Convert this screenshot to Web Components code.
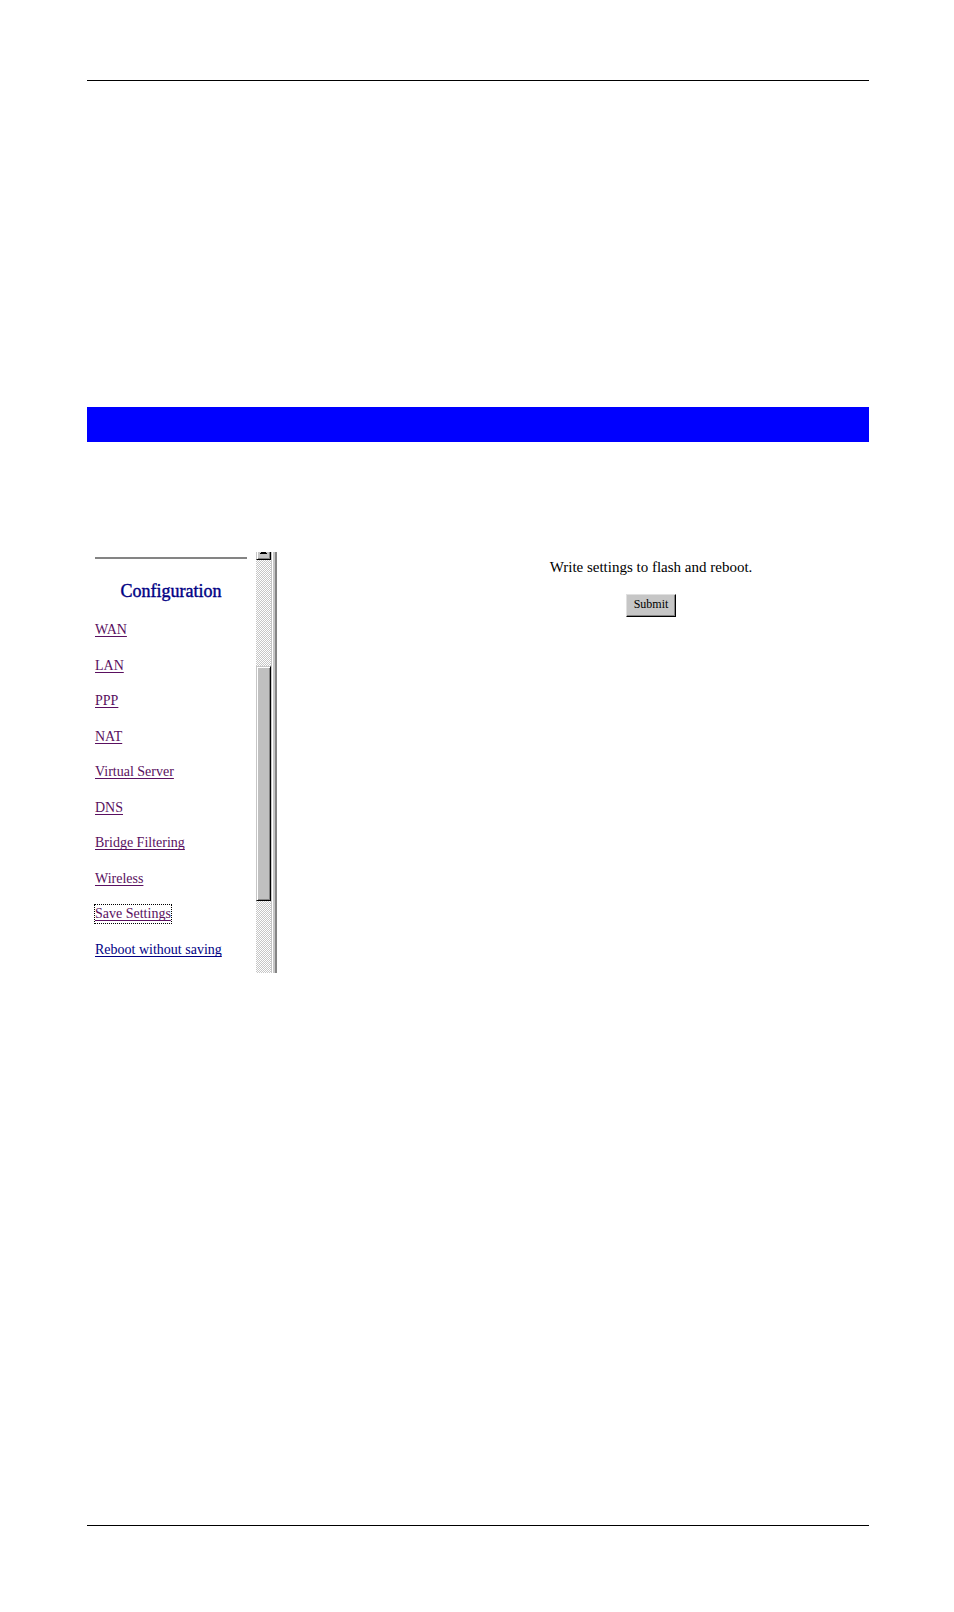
<!DOCTYPE html>
<html lang="en">
<head>
<meta charset="utf-8">
<meta name="viewport" content="width=device-width, initial-scale=1">
<title>Save Settings</title>
<style>
    body {
        margin: 0;
        background: #fff;
        color: #000;
        font-family: "Liberation Serif", "Times New Roman", serif;
        font-size: 14px;
    }
</style>
</head>
<body>
<manual-page>
    <settings-frame>
        <config-menu slot="menu" label="Configuration">
            <menu-link>WAN</menu-link>
            <menu-link>LAN</menu-link>
            <menu-link>PPP</menu-link>
            <menu-link>NAT</menu-link>
            <menu-link>Virtual Server</menu-link>
            <menu-link>DNS</menu-link>
            <menu-link>Bridge Filtering</menu-link>
            <menu-link>Wireless</menu-link>
            <menu-link state="current">Save Settings</menu-link>
            <menu-link state="new">Reboot without saving</menu-link>
        </config-menu>
        <frame-scrollbar slot="scrollbar"></frame-scrollbar>
        <submit-form label="Submit">Write settings to flash and reboot.</submit-form>
    </settings-frame>
</manual-page>

<script>
class ManualPage extends HTMLElement {
    constructor() {
        super();
        this.shadow = this.attachShadow({mode: 'open'});
    }

    connectedCallback() {
        this.shadow.innerHTML = `
            <style>
                :host {
                    display: flex;
                    flex-direction: column;
                    box-sizing: border-box;
                    min-height: 100vh;
                    padding: 80px 85px 86px 87px;
                }
                header {
                    border-top: 1px solid #000;
                    padding-top: 326px;
                }
                .banner {
                    height: 35px;
                    background: #00f;
                }
                main {
                    flex: 1;
                    padding-top: 110px;
                }
                footer {
                    border-top: 1px solid #000;
                }
            </style>
            <header><div class="banner"></div></header>
            <main><slot></slot></main>
            <footer></footer>
        `;
    }
}

class SettingsFrame extends HTMLElement {
    constructor() {
        super();
        this.shadow = this.attachShadow({mode: 'open'});
    }

    connectedCallback() {
        this.shadow.innerHTML = `
            <style>
                :host {
                    display: grid;
                    grid-template-columns: 169px 21px 1fr;
                    min-height: 421px;
                }
                section {
                    padding-left: 156px;
                }
            </style>
            <slot name="menu"></slot>
            <slot name="scrollbar"></slot>
            <section><slot></slot></section>
        `;
    }
}

class ConfigMenu extends HTMLElement {
    constructor() {
        super();
        this.shadow = this.attachShadow({mode: 'open'});
        this.label = this.getAttribute('label') || '';
    }

    connectedCallback() {
        this.shadow.innerHTML = `
            <style>
                :host {
                    display: flex;
                    flex-direction: column;
                    padding: 5px 9px 14px 8px;
                }
                hr {
                    width: 100%;
                    margin: 0;
                    border: 0;
                    border-top: 2px solid #848484;
                }
                h2 {
                    margin: 21px 0 19px;
                    color: #000084;
                    font-size: 18px;
                    font-weight: normal;
                    line-height: 22px;
                    text-align: center;
                    -webkit-text-stroke: 0.4px;
                }
                nav {
                    display: flex;
                    flex: 1;
                    flex-direction: column;
                    align-items: flex-start;
                    justify-content: space-between;
                }
            </style>
            <hr>
            <h2>${this.label}</h2>
            <nav aria-label="${this.label}"><slot></slot></nav>
        `;
    }
}

class MenuLink extends HTMLElement {
    constructor() {
        super();
        this.shadow = this.attachShadow({mode: 'open'});
        this.state = this.getAttribute('state') || 'visited';
    }

    setColor() {
        return this.state === 'new' ? '#000084' : '#5a1060';
    }

    render() {
        this.shadow.innerHTML = `
            <style>
                :host {
                    display: block;
                }
                a {
                    display: block;
                    color: ${this.setColor()};
                    font-size: 14px;
                    line-height: 18px;
                    text-decoration: underline;
                    text-decoration-thickness: 1px;
                    text-decoration-skip-ink: none;
                    text-underline-offset: 2px;
                }
                a.current {
                    outline: 1px dotted #000;
                }
            </style>
            <a href="#" class="${this.state}"><slot></slot></a>
        `;
    }

    connectedCallback() {
        this.render();
    }
}

class FrameScrollbar extends HTMLElement {
    constructor() {
        super();
        this.shadow = this.attachShadow({mode: 'open'});
    }

    connectedCallback() {
        this.shadow.innerHTML = `
            <style>
                :host {
                    display: flex;
                    box-sizing: border-box;
                    border-right: 2px solid #848484;
                }
                .track {
                    display: grid;
                    grid-template-rows: 8px 106fr 235fr 72fr;
                    width: 15px;
                    background: repeating-conic-gradient(#c6c6c6 0 25%, #fff 0 50%) 0 0 / 2px 2px;
                }
                button {
                    display: flex;
                    justify-content: center;
                    margin: 0;
                    padding: 0;
                    overflow: hidden;
                    border: solid;
                    border-width: 0 1px 1px;
                    border-color: #000 #000 #000 #c6c6c6;
                    border-radius: 0;
                    background: #c6c6c6;
                    box-shadow: inset 1px 0 #fff, inset -1px -1px #848484;
                }
                svg {
                    display: block;
                }
                .thumb {
                    grid-row: 3;
                    border: 1px solid #000;
                    border-color: #c6c6c6 #000 #000 #c6c6c6;
                    background: #c0c0c0;
                    box-shadow: inset 1px 1px #fff, inset -1px -1px #848484;
                }
                .edge {
                    flex: 1;
                    border-left: 1px solid #c6c6c6;
                    background: linear-gradient(to right, #fff 1px, #c6c6c6 1px);
                }
            </style>
            <div class="track">
                <button type="button" aria-label="Scroll up">
                    <svg width="7" height="2" viewBox="0 0 7 2"><path d="M1 0H6V1H7V2H0V1H1Z"/></svg>
                </button>
                <div class="thumb"></div>
            </div>
            <div class="edge"></div>
        `;
    }
}

class SubmitForm extends HTMLElement {
    constructor() {
        super();
        this.shadow = this.attachShadow({mode: 'open'});
        this.label = this.getAttribute('label') || 'Go';
    }

    connectedCallback() {
        this.shadow.innerHTML = `
            <style>
                :host {
                    display: block;
                }
                form {
                    display: flex;
                    flex-direction: column;
                    align-items: center;
                    gap: 18px;
                    padding-top: 6px;
                }
                p {
                    margin: 0;
                    font-size: 15px;
                    line-height: 18px;
                }
                button {
                    padding: 0 7px 3px;
                    border: 1px solid #000;
                    border-color: #e0e0e0 #000 #000 #e0e0e0;
                    border-radius: 0;
                    background: #c6c6c6;
                    box-shadow: inset -1px -1px #848484;
                    color: #000;
                    font: 12px/18px "Liberation Serif", "Times New Roman", serif;
                }
            </style>
            <form>
                <p><slot></slot></p>
                <button type="button">${this.label}</button>
            </form>
        `;
    }
}

customElements.define('manual-page', ManualPage);
customElements.define('settings-frame', SettingsFrame);
customElements.define('config-menu', ConfigMenu);
customElements.define('menu-link', MenuLink);
customElements.define('frame-scrollbar', FrameScrollbar);
customElements.define('submit-form', SubmitForm);
</script>
</body>
</html>
